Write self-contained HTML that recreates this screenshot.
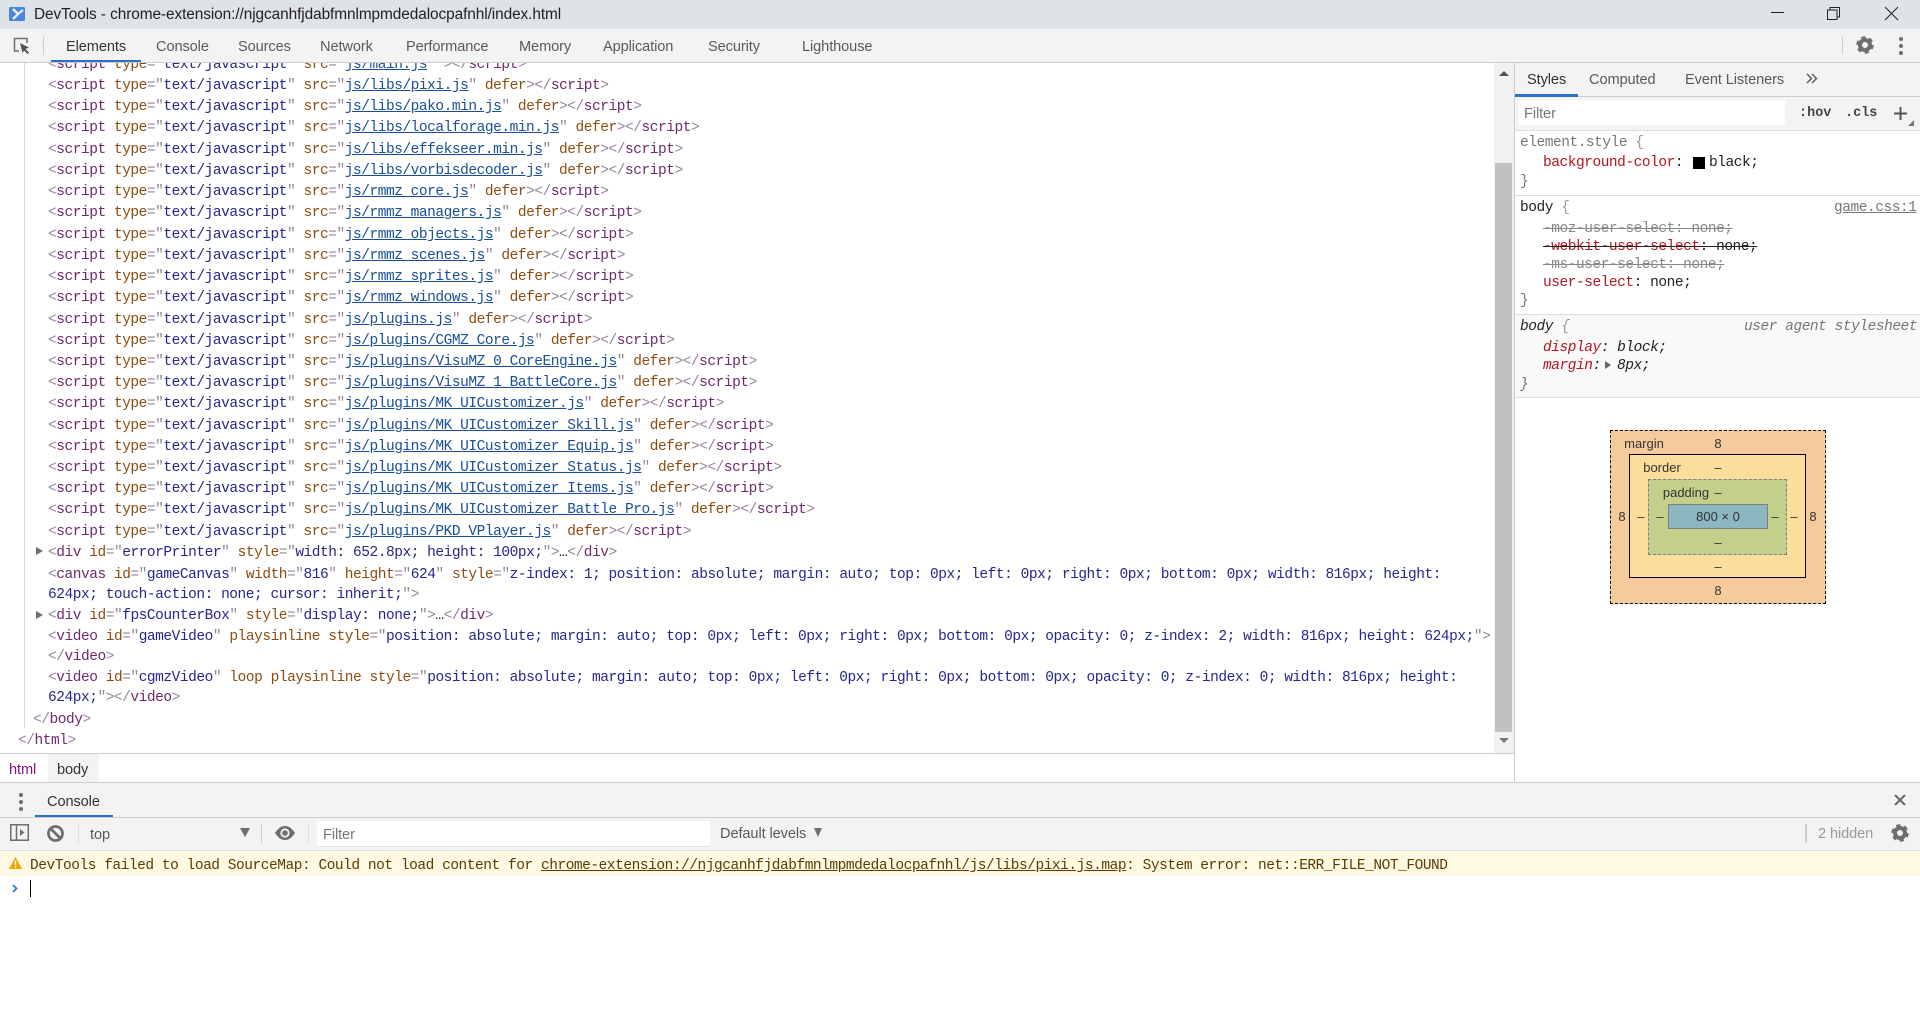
<!DOCTYPE html>
<html><head><meta charset="utf-8"><title>DevTools</title>
<style>
html,body{margin:0;padding:0;width:1920px;height:1015px;overflow:hidden;background:#fff}
body{position:relative;font-family:"Liberation Sans",sans-serif;font-size:14px;color:#333}
.a{position:absolute}
.ui{position:absolute;white-space:pre;line-height:20px;font-size:14.6px;color:#5a5a5a;letter-spacing:-.1px}
.l,.m{position:absolute;white-space:pre;font-family:"Liberation Mono",monospace;font-size:14.5px;letter-spacing:-.46px;line-height:20px;color:#222}
.l{left:48px}
.l i{font-style:normal;color:#94849a}
.l b{font-weight:normal;color:#6e2a6c}
.l em{font-style:normal;color:#8c4c10}
.l var{font-style:normal;color:#26268c}
.l u{color:#1a4f96}
.r{color:#b0171f}
.gy{color:#777}
.st{text-decoration:line-through}
.it{font-style:italic}
.bm{position:absolute;white-space:pre;font-size:13px;line-height:16px;color:#333;transform:translateX(-50%)}
svg{position:absolute;overflow:visible}
</style></head><body>

<!-- title bar -->
<div class="a" style="left:0;top:0;width:1920px;height:29px;background:#dfe2e7"></div>
<svg style="left:9px;top:7px" width="16" height="14" viewBox="0 0 16 14"><rect width="16" height="14" rx="1.5" fill="#4a86de"/><path d="M4 2 L9 7 L4 12 M9 7 L14 3" stroke="#e4eeff" stroke-width="2.4" fill="none"/></svg>
<div class="ui" style="left:34px;top:5px;color:#222;font-size:15.4px;letter-spacing:-.08px">DevTools - chrome-extension://njgcanhfjdabfmnlmpmdedalocpafnhl/index.html</div>
<div class="a" style="left:1771px;top:12px;width:13px;height:1px;background:#222"></div>
<svg style="left:1827px;top:7px" width="13" height="13" viewBox="0 0 13 13"><rect x=".5" y="3" width="9.5" height="9.5" fill="none" stroke="#222"/><path d="M3 3V.5H12.5V10H10" fill="none" stroke="#222"/></svg>
<svg style="left:1885px;top:7px" width="13" height="13" viewBox="0 0 13 13"><path d="M0 0L13 13M13 0L0 13" stroke="#222" stroke-width="1"/></svg>

<!-- code -->
<div class="a" style="left:24px;top:63px;width:1px;height:665px;background:#cdd9ea"></div>
<div class="l" style="top:55px"><i>&lt;</i><b>script</b> <em>type</em><i>="</i><var>text/javascript</var><i>"</i> <em>src</em><i>="</i><u>js/main.js</u><i>" &gt;&lt;/</i><b>script</b><i>&gt;</i></div>
<div class="l" style="top:76px"><i>&lt;</i><b>script</b> <em>type</em><i>="</i><var>text/javascript</var><i>"</i> <em>src</em><i>="</i><u>js/libs/pixi.js</u><i>"</i> <em>defer</em><i>&gt;&lt;/</i><b>script</b><i>&gt;</i></div>
<div class="l" style="top:97px"><i>&lt;</i><b>script</b> <em>type</em><i>="</i><var>text/javascript</var><i>"</i> <em>src</em><i>="</i><u>js/libs/pako.min.js</u><i>"</i> <em>defer</em><i>&gt;&lt;/</i><b>script</b><i>&gt;</i></div>
<div class="l" style="top:118px"><i>&lt;</i><b>script</b> <em>type</em><i>="</i><var>text/javascript</var><i>"</i> <em>src</em><i>="</i><u>js/libs/localforage.min.js</u><i>"</i> <em>defer</em><i>&gt;&lt;/</i><b>script</b><i>&gt;</i></div>
<div class="l" style="top:140px"><i>&lt;</i><b>script</b> <em>type</em><i>="</i><var>text/javascript</var><i>"</i> <em>src</em><i>="</i><u>js/libs/effekseer.min.js</u><i>"</i> <em>defer</em><i>&gt;&lt;/</i><b>script</b><i>&gt;</i></div>
<div class="l" style="top:161px"><i>&lt;</i><b>script</b> <em>type</em><i>="</i><var>text/javascript</var><i>"</i> <em>src</em><i>="</i><u>js/libs/vorbisdecoder.js</u><i>"</i> <em>defer</em><i>&gt;&lt;/</i><b>script</b><i>&gt;</i></div>
<div class="l" style="top:182px"><i>&lt;</i><b>script</b> <em>type</em><i>="</i><var>text/javascript</var><i>"</i> <em>src</em><i>="</i><u>js/rmmz_core.js</u><i>"</i> <em>defer</em><i>&gt;&lt;/</i><b>script</b><i>&gt;</i></div>
<div class="l" style="top:203px"><i>&lt;</i><b>script</b> <em>type</em><i>="</i><var>text/javascript</var><i>"</i> <em>src</em><i>="</i><u>js/rmmz_managers.js</u><i>"</i> <em>defer</em><i>&gt;&lt;/</i><b>script</b><i>&gt;</i></div>
<div class="l" style="top:225px"><i>&lt;</i><b>script</b> <em>type</em><i>="</i><var>text/javascript</var><i>"</i> <em>src</em><i>="</i><u>js/rmmz_objects.js</u><i>"</i> <em>defer</em><i>&gt;&lt;/</i><b>script</b><i>&gt;</i></div>
<div class="l" style="top:246px"><i>&lt;</i><b>script</b> <em>type</em><i>="</i><var>text/javascript</var><i>"</i> <em>src</em><i>="</i><u>js/rmmz_scenes.js</u><i>"</i> <em>defer</em><i>&gt;&lt;/</i><b>script</b><i>&gt;</i></div>
<div class="l" style="top:267px"><i>&lt;</i><b>script</b> <em>type</em><i>="</i><var>text/javascript</var><i>"</i> <em>src</em><i>="</i><u>js/rmmz_sprites.js</u><i>"</i> <em>defer</em><i>&gt;&lt;/</i><b>script</b><i>&gt;</i></div>
<div class="l" style="top:288px"><i>&lt;</i><b>script</b> <em>type</em><i>="</i><var>text/javascript</var><i>"</i> <em>src</em><i>="</i><u>js/rmmz_windows.js</u><i>"</i> <em>defer</em><i>&gt;&lt;/</i><b>script</b><i>&gt;</i></div>
<div class="l" style="top:310px"><i>&lt;</i><b>script</b> <em>type</em><i>="</i><var>text/javascript</var><i>"</i> <em>src</em><i>="</i><u>js/plugins.js</u><i>"</i> <em>defer</em><i>&gt;&lt;/</i><b>script</b><i>&gt;</i></div>
<div class="l" style="top:331px"><i>&lt;</i><b>script</b> <em>type</em><i>="</i><var>text/javascript</var><i>"</i> <em>src</em><i>="</i><u>js/plugins/CGMZ_Core.js</u><i>"</i> <em>defer</em><i>&gt;&lt;/</i><b>script</b><i>&gt;</i></div>
<div class="l" style="top:352px"><i>&lt;</i><b>script</b> <em>type</em><i>="</i><var>text/javascript</var><i>"</i> <em>src</em><i>="</i><u>js/plugins/VisuMZ_0_CoreEngine.js</u><i>"</i> <em>defer</em><i>&gt;&lt;/</i><b>script</b><i>&gt;</i></div>
<div class="l" style="top:373px"><i>&lt;</i><b>script</b> <em>type</em><i>="</i><var>text/javascript</var><i>"</i> <em>src</em><i>="</i><u>js/plugins/VisuMZ_1_BattleCore.js</u><i>"</i> <em>defer</em><i>&gt;&lt;/</i><b>script</b><i>&gt;</i></div>
<div class="l" style="top:394px"><i>&lt;</i><b>script</b> <em>type</em><i>="</i><var>text/javascript</var><i>"</i> <em>src</em><i>="</i><u>js/plugins/MK_UICustomizer.js</u><i>"</i> <em>defer</em><i>&gt;&lt;/</i><b>script</b><i>&gt;</i></div>
<div class="l" style="top:416px"><i>&lt;</i><b>script</b> <em>type</em><i>="</i><var>text/javascript</var><i>"</i> <em>src</em><i>="</i><u>js/plugins/MK_UICustomizer_Skill.js</u><i>"</i> <em>defer</em><i>&gt;&lt;/</i><b>script</b><i>&gt;</i></div>
<div class="l" style="top:437px"><i>&lt;</i><b>script</b> <em>type</em><i>="</i><var>text/javascript</var><i>"</i> <em>src</em><i>="</i><u>js/plugins/MK_UICustomizer_Equip.js</u><i>"</i> <em>defer</em><i>&gt;&lt;/</i><b>script</b><i>&gt;</i></div>
<div class="l" style="top:458px"><i>&lt;</i><b>script</b> <em>type</em><i>="</i><var>text/javascript</var><i>"</i> <em>src</em><i>="</i><u>js/plugins/MK_UICustomizer_Status.js</u><i>"</i> <em>defer</em><i>&gt;&lt;/</i><b>script</b><i>&gt;</i></div>
<div class="l" style="top:479px"><i>&lt;</i><b>script</b> <em>type</em><i>="</i><var>text/javascript</var><i>"</i> <em>src</em><i>="</i><u>js/plugins/MK_UICustomizer_Items.js</u><i>"</i> <em>defer</em><i>&gt;&lt;/</i><b>script</b><i>&gt;</i></div>
<div class="l" style="top:500px"><i>&lt;</i><b>script</b> <em>type</em><i>="</i><var>text/javascript</var><i>"</i> <em>src</em><i>="</i><u>js/plugins/MK_UICustomizer_Battle_Pro.js</u><i>"</i> <em>defer</em><i>&gt;&lt;/</i><b>script</b><i>&gt;</i></div>
<div class="l" style="top:522px"><i>&lt;</i><b>script</b> <em>type</em><i>="</i><var>text/javascript</var><i>"</i> <em>src</em><i>="</i><u>js/plugins/PKD_VPlayer.js</u><i>"</i> <em>defer</em><i>&gt;&lt;/</i><b>script</b><i>&gt;</i></div>
<div class="a" style="left:36px;top:547px;width:0;height:0;border-left:7px solid #6e6e6e;border-top:4.5px solid transparent;border-bottom:4.5px solid transparent"></div>
<div class="l" style="top:543px"><i>&lt;</i><b>div</b> <em>id</em><i>="</i><var>errorPrinter</var><i>"</i> <em>style</em><i>="</i><var>width: 652.8px; height: 100px;</var><i>"&gt;</i>…<i>&lt;/</i><b>div</b><i>&gt;</i></div>
<div class="l" style="top:565px"><i>&lt;</i><b>canvas</b> <em>id</em><i>="</i><var>gameCanvas</var><i>"</i> <em>width</em><i>="</i><var>816</var><i>"</i> <em>height</em><i>="</i><var>624</var><i>"</i> <em>style</em><i>="</i><var>z-index: 1; position: absolute; margin: auto; top: 0px; left: 0px; right: 0px; bottom: 0px; width: 816px; height:</var></div>
<div class="l" style="top:585px"><var>624px; touch-action: none; cursor: inherit;</var><i>"&gt;</i></div>
<div class="a" style="left:36px;top:611px;width:0;height:0;border-left:7px solid #6e6e6e;border-top:4.5px solid transparent;border-bottom:4.5px solid transparent"></div>
<div class="l" style="top:606px"><i>&lt;</i><b>div</b> <em>id</em><i>="</i><var>fpsCounterBox</var><i>"</i> <em>style</em><i>="</i><var>display: none;</var><i>"&gt;</i>…<i>&lt;/</i><b>div</b><i>&gt;</i></div>
<div class="l" style="top:627px"><i>&lt;</i><b>video</b> <em>id</em><i>="</i><var>gameVideo</var><i>"</i> <em>playsinline</em> <em>style</em><i>="</i><var>position: absolute; margin: auto; top: 0px; left: 0px; right: 0px; bottom: 0px; opacity: 0; z-index: 2; width: 816px; height: 624px;</var><i>"&gt;</i></div>
<div class="l" style="top:647px"><i>&lt;/</i><b>video</b><i>&gt;</i></div>
<div class="l" style="top:668px"><i>&lt;</i><b>video</b> <em>id</em><i>="</i><var>cgmzVideo</var><i>"</i> <em>loop</em> <em>playsinline</em> <em>style</em><i>="</i><var>position: absolute; margin: auto; top: 0px; left: 0px; right: 0px; bottom: 0px; opacity: 0; z-index: 0; width: 816px; height:</var></div>
<div class="l" style="top:688px"><var>624px;</var><i>"&gt;&lt;/</i><b>video</b><i>&gt;</i></div>
<div class="l" style="top:710px;left:33px"><i>&lt;/</i><b>body</b><i>&gt;</i></div>
<div class="l" style="top:731px;left:18px"><i>&lt;/</i><b>html</b><i>&gt;</i></div>

<!-- toolbar -->
<div class="a" style="left:0;top:29px;width:1920px;height:33px;background:#f3f3f3;border-bottom:1px solid #ccc;z-index:2">
 <svg style="left:13px;top:8px" width="18" height="17" viewBox="0 0 18 17"><path d="M6 14H1.5V1.5H14V6" fill="none" stroke="#6e6e6e" stroke-width="1.5"/><path d="M7 6L16 10.5L12.5 12L16 15.5L14.5 17L11 13.5L9.5 16Z" fill="#555"/></svg>
 <div class="a" style="left:43px;top:7px;width:1px;height:19px;background:#ccc"></div>
 <div class="a" style="left:51px;top:31px;width:90px;height:2px;background:#2a6fc9"></div>
 <div class="ui" style="left:66px;top:8px;color:#333">Elements</div>
 <div class="ui" style="left:156px;top:8px">Console</div>
 <div class="ui" style="left:238px;top:8px">Sources</div>
 <div class="ui" style="left:320px;top:8px">Network</div>
 <div class="ui" style="left:406px;top:8px">Performance</div>
 <div class="ui" style="left:519px;top:8px">Memory</div>
 <div class="ui" style="left:603px;top:8px">Application</div>
 <div class="ui" style="left:708px;top:8px">Security</div>
 <div class="ui" style="left:802px;top:8px">Lighthouse</div>
 <div class="a" style="left:1842px;top:7px;width:1px;height:18px;background:#ccc"></div>
 <svg style="left:1855px;top:6px" width="20" height="20" viewBox="-10 -10 20 20"><circle r="5" fill="none" stroke="#6e6e6e" stroke-width="4"/><circle r="7.5" fill="none" stroke="#6e6e6e" stroke-width="2.5" stroke-dasharray="4.2 3.65"/></svg>
 <div class="a" style="left:1899px;top:8px;width:4px;height:4px;border-radius:2px;background:#6e6e6e;box-shadow:0 7px 0 #6e6e6e,0 14px 0 #6e6e6e"></div>
</div>

<!-- scrollbar -->
<div class="a" style="left:1494px;top:63px;width:20px;height:690px;background:#f1f1f1;z-index:1"></div>
<div class="a" style="left:1495px;top:163px;width:17px;height:569px;background:#c1c1c1;z-index:1"></div>
<div class="a" style="left:1499px;top:71px;width:0;height:0;border-left:5px solid transparent;border-right:5px solid transparent;border-bottom:5px solid #555;z-index:1"></div>
<div class="a" style="left:1499px;top:738px;width:0;height:0;border-left:5px solid transparent;border-right:5px solid transparent;border-top:5px solid #777;z-index:1"></div>

<!-- breadcrumbs -->
<div class="a" style="left:0;top:753px;width:1514px;height:1px;background:#ccc"></div>
<div class="a" style="left:48px;top:754px;width:51px;height:28px;background:#f3f3f3"></div>
<div class="ui" style="left:9px;top:760px;color:#881280">html</div>
<div class="ui" style="left:57px;top:760px;color:#333">body</div>

<!-- sidebar -->
<div class="a" style="left:1514px;top:63px;width:1px;height:719px;background:#ccc"></div>
<div class="a" style="left:1515px;top:63px;width:405px;height:33px;background:#f3f3f3;border-bottom:1px solid #ccc"></div>
<div class="a" style="left:1515px;top:94px;width:63px;height:3px;background:#2a6fc9"></div>
<div class="ui" style="left:1527px;top:70px;color:#333">Styles</div>
<div class="ui" style="left:1589px;top:70px">Computed</div>
<div class="ui" style="left:1685px;top:70px">Event Listeners</div>
<svg style="left:1806px;top:73px" width="12" height="11" viewBox="0 0 12 11"><path d="M1 1L5.5 5.5L1 10M6 1L10.5 5.5L6 10" fill="none" stroke="#555" stroke-width="1.4"/></svg>
<div class="a" style="left:1515px;top:97px;width:405px;height:33px;background:#f3f3f3;border-bottom:1px solid #ddd"></div>
<div class="a" style="left:1519px;top:100px;width:266px;height:25px;background:#fff"></div>
<div class="ui" style="left:1524px;top:104px;color:#777">Filter</div>
<div class="m" style="left:1799px;top:104px;font-weight:bold;font-size:13.5px;letter-spacing:0;color:#444">:hov</div>
<div class="m" style="left:1845px;top:104px;font-weight:bold;font-size:13.5px;letter-spacing:0;color:#444">.cls</div>
<svg style="left:1894px;top:107px" width="13" height="13" viewBox="0 0 13 13"><path d="M6.5 0V13M0 6.5H13" stroke="#555" stroke-width="2"/></svg>
<svg style="left:1908px;top:120px" width="6" height="6" viewBox="0 0 6 6"><path d="M6 0V6H0Z" fill="#777"/></svg>

<div class="m gy" style="left:1520px;top:133px">element.style <span style="color:#999">{</span></div>
<div class="m" style="left:1543px;top:153px"><span class="r">background-color</span>: </div>
<div class="a" style="left:1693px;top:157px;width:12px;height:12px;background:#000"></div>
<div class="m" style="left:1709px;top:153px">black;</div>
<div class="m gy" style="left:1520px;top:172px">}</div>
<div class="a" style="left:1515px;top:195px;width:405px;height:1px;background:#ddd"></div>
<div class="m" style="left:1520px;top:198px">body <span style="color:#999">{</span></div>
<div class="m gy" style="left:1834px;top:198px;text-decoration:underline">game.css:1</div>
<div class="m st" style="left:1543px;top:219px;color:#888">-moz-user-select: none;</div>
<div class="m st" style="left:1543px;top:237px"><span class="r">-webkit-user-select</span>: none;</div>
<div class="m st" style="left:1543px;top:255px;color:#888">-ms-user-select: none;</div>
<div class="m" style="left:1543px;top:273px"><span class="r">user-select</span>: none;</div>
<div class="m gy" style="left:1520px;top:291px">}</div>
<div class="a" style="left:1515px;top:314px;width:405px;height:82px;background:#f9f9f9;border-top:1px solid #ddd;border-bottom:1px solid #ddd"></div>
<div class="m it" style="left:1520px;top:317px">body <span style="color:#999">{</span></div>
<div class="m it gy" style="left:1744px;top:317px">user agent stylesheet</div>
<div class="m it" style="left:1543px;top:338px"><span class="r">display</span>: block;</div>
<div class="m it" style="left:1543px;top:356px"><span class="r">margin</span>:</div>
<div class="a" style="left:1605px;top:361px;width:0;height:0;border-left:6px solid #666;border-top:4px solid transparent;border-bottom:4px solid transparent"></div>
<div class="m it" style="left:1617px;top:356px">8px;</div>
<div class="m it gy" style="left:1520px;top:375px">}</div>

<!-- box model -->
<div class="a" style="left:1610px;top:430px;width:214px;height:172px;background:#f6cb9b;border:1px dashed #000"></div>
<div class="a" style="left:1629px;top:454px;width:175px;height:122px;background:#fddd9b;border:1px solid #000"></div>
<div class="a" style="left:1648px;top:479px;width:137px;height:74px;background:#c3d08b;border:1px dashed #808080"></div>
<div class="a" style="left:1668px;top:504px;width:98px;height:23px;background:#8cb6c0;border:1px solid #808080"></div>
<div class="bm" style="left:1644px;top:436px">margin</div>
<div class="bm" style="left:1718px;top:436px">8</div>
<div class="bm" style="left:1662px;top:460px">border</div>
<div class="bm" style="left:1718px;top:460px">–</div>
<div class="bm" style="left:1686px;top:485px">padding</div>
<div class="bm" style="left:1718px;top:485px">–</div>
<div class="bm" style="left:1718px;top:509px">800 × 0</div>
<div class="bm" style="left:1622px;top:509px">8</div>
<div class="bm" style="left:1641px;top:509px">–</div>
<div class="bm" style="left:1660px;top:509px">–</div>
<div class="bm" style="left:1775px;top:509px">–</div>
<div class="bm" style="left:1794px;top:509px">–</div>
<div class="bm" style="left:1813px;top:509px">8</div>
<div class="bm" style="left:1718px;top:535px">–</div>
<div class="bm" style="left:1718px;top:559px">–</div>
<div class="bm" style="left:1718px;top:583px">8</div>

<!-- console drawer -->
<div class="a" style="left:0;top:782px;width:1920px;height:34px;background:#f3f3f3;border-top:1px solid #ccc;border-bottom:1px solid #ccc"></div>
<div class="a" style="left:19px;top:793px;width:4px;height:4px;border-radius:2px;background:#6e6e6e;box-shadow:0 7px 0 #6e6e6e,0 14px 0 #6e6e6e"></div>
<div class="a" style="left:35px;top:815px;width:78px;height:2px;background:#2a6fc9"></div>
<div class="ui" style="left:47px;top:792px;color:#333">Console</div>
<svg style="left:1894px;top:794px" width="12" height="12" viewBox="0 0 12 12"><path d="M1 1L11 11M11 1L1 11" stroke="#666" stroke-width="2"/></svg>

<div class="a" style="left:0;top:818px;width:1920px;height:32px;background:#f3f3f3;border-bottom:1px solid #ddd"></div>
<svg style="left:10px;top:824px" width="19" height="17" viewBox="0 0 19 17"><rect x=".75" y=".75" width="17.5" height="15.5" fill="none" stroke="#6e6e6e" stroke-width="1.5"/><path d="M6.5 1V16" stroke="#6e6e6e" stroke-width="1.5"/><path d="M10 5V12L14.5 8.5Z" fill="#6e6e6e"/></svg>
<svg style="left:47px;top:825px" width="17" height="17" viewBox="0 0 17 17"><circle cx="8.5" cy="8.5" r="7" fill="none" stroke="#6e6e6e" stroke-width="2.8"/><path d="M3.5 3.5L13.5 13.5" stroke="#6e6e6e" stroke-width="2.8"/></svg>
<div class="a" style="left:78px;top:824px;width:1px;height:19px;background:#ddd"></div>
<div class="ui" style="left:90px;top:825px">top</div>
<div class="a" style="left:240px;top:828px;width:0;height:0;border-left:5px solid transparent;border-right:5px solid transparent;border-top:9px solid #6e6e6e"></div>
<div class="a" style="left:261px;top:824px;width:1px;height:19px;background:#ccc"></div>
<svg style="left:275px;top:826px" width="20" height="14" viewBox="0 0 20 14"><path d="M0 7C4 1 7 0 10 0S16 1 20 7C16 13 13 14 10 14S4 13 0 7Z" fill="#6e6e6e"/><circle cx="10" cy="7" r="4.6" fill="#f3f3f3"/><circle cx="10" cy="7" r="2.8" fill="#6e6e6e"/></svg>
<div class="a" style="left:308px;top:824px;width:1px;height:19px;background:#ddd"></div>
<div class="a" style="left:317px;top:821px;width:393px;height:25px;background:#fff;border-bottom:1px solid #e4e4e4"></div>
<div class="ui" style="left:323px;top:825px;color:#777">Filter</div>
<div class="ui" style="left:720px;top:824px">Default levels</div>
<div class="a" style="left:814px;top:828px;width:0;height:0;border-left:4.5px solid transparent;border-right:4.5px solid transparent;border-top:9px solid #6e6e6e"></div>
<div class="a" style="left:1805px;top:824px;width:2px;height:19px;background:#ccc"></div>
<div class="ui" style="left:1818px;top:824px;color:#999">2 hidden</div>
<svg style="left:1890px;top:823px" width="20" height="20" viewBox="-10 -10 20 20"><circle r="5" fill="none" stroke="#6e6e6e" stroke-width="4"/><circle r="7.5" fill="none" stroke="#6e6e6e" stroke-width="2.5" stroke-dasharray="4.2 3.65"/></svg>

<div class="a" style="left:0;top:851px;width:1920px;height:25px;background:#fff9e3"></div>
<svg style="left:9px;top:857px" width="13" height="12" viewBox="0 0 13 12"><path d="M6.5 0L13 12H0Z" fill="#e9a800"/><path d="M6.5 3.5V8M6.5 9V10.8" stroke="#fff" stroke-width="1.4"/></svg>
<div class="m" style="left:30px;top:856px;color:#5c3b00">DevTools failed to load SourceMap: Could not load content for <u>chrome-extension://njgcanhfjdabfmnlmpmdedalocpafnhl/js/libs/pixi.js.map</u>: System error: net::ERR_FILE_NOT_FOUND</div>
<svg style="left:12px;top:884px" width="6" height="9" viewBox="0 0 6 9"><path d="M1 1L4.5 4.5L1 8" fill="none" stroke="#3a78d8" stroke-width="1.8"/></svg>
<div class="a" style="left:30px;top:880px;width:1px;height:17px;background:#000"></div>
</body></html>
